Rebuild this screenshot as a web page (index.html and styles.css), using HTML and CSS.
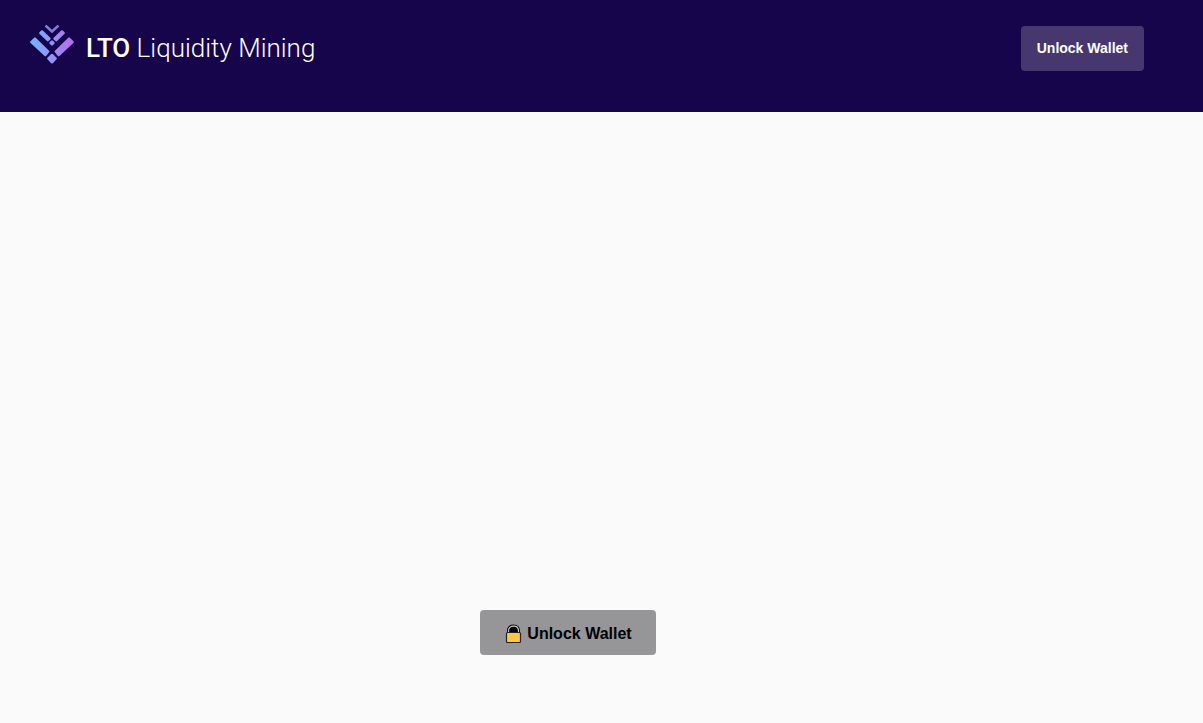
FILE: index.html
```html
<!DOCTYPE html>
<html lang="en">
<head>
<meta charset="utf-8">
<meta name="viewport" content="width=device-width, initial-scale=1">
<title>LTO Liquidity Mining</title>
<link rel="stylesheet" href="styles.css">
</head>
<body>
<header class="topbar">
  <div class="brand">
    <svg class="brand-logo" viewBox="0 0 44 40" aria-hidden="true">
      <defs>
        <linearGradient id="glow" gradientUnits="userSpaceOnUse" x1="0" y1="0" x2="44" y2="0">
          <stop offset="0" stop-color="#74b4ff"/>
          <stop offset="0.5" stop-color="#9492fa"/>
          <stop offset="1" stop-color="#bd66ee"/>
        </linearGradient>
      </defs>
      <g fill="url(#glow)" stroke="url(#glow)" stroke-width="2.400" stroke-linejoin="round">
        <path d="M1.400 17 4.900 13.600 18.200 26.600 15.400 30Z"/>
        <path d="M42.600 17 39.100 13.600 25.800 26.600 28.600 30Z"/>
        <path d="M22 29.900 25.700 33.500 22 37.300 18.300 33.500Z"/>
        <path d="M10.300 8 12 6.400 19.500 13.600 17.800 15.200Z"/>
        <path d="M33.700 8 32 6.400 24.500 13.600 26.200 15.200Z"/>
        <path d="M22 16.600 23.500 18 22 19.500 20.500 18Z"/>
      </g>
      <path d="M15.500 .5 22 6.500 28.500 .5" fill="none" stroke="url(#glow)" stroke-width="2.400" opacity="0.850"/>
    </svg>
    <h1 class="brand-name"><strong>LTO</strong> Liquidity Mining</h1>
  </div>
  <button class="button button-header" type="button">Unlock Wallet</button>
</header>
<main class="content">
  <button class="button button-main" type="button">
    <svg class="lock" viewBox="0 0 19 20" aria-hidden="true">
      <path d="M4.500 10V7C4.500 3.500 6.500 2 9.500 2S14.500 3.500 14.500 7V10Z" fill="#000" stroke="#000" stroke-width="3"/>
      <path d="M4.500 9V7C4.500 3.800 6.500 2.200 9.500 2.200S14.500 3.800 14.500 7V9" fill="none" stroke="#c8c8c8" stroke-width="1.200"/>
      <rect x="2.500" y="8.500" width="14" height="10" rx="1" fill="#ffc83d" stroke="#222" stroke-width="1.200"/>
    </svg>
    Unlock Wallet
  </button>
</main>
</body>
</html>
```
FILE: styles.css
```css
* {
  box-sizing: border-box;
}

body {
  margin: 0;
  min-height: 100vh;
  display: flex;
  flex-direction: column;
  background: #fafafa;
  font-family: "Liberation Sans", Arial, sans-serif;
}

.topbar {
  display: flex;
  justify-content: space-between;
  align-items: flex-start;
  padding: 26px 59px 41px 30px;
  background: #17054b;
}

.brand {
  display: flex;
  align-items: center;
  gap: 12px;
  height: 44px;
}

.brand-logo {
  width: 44px;
  height: 40px;
  margin-bottom: 6px;
}

.brand-name {
  margin: 0;
  color: #fff;
  font-family: Roboto, sans-serif;
  font-size: 26px;
  font-weight: 300;
  line-height: 32px;
}

.brand-name strong {
  font-weight: 500;
}

.button {
  display: flex;
  align-items: center;
  justify-content: center;
  height: 45px;
  border: 0;
  border-radius: 4px;
  font-family: inherit;
  font-weight: 700;
  cursor: pointer;
}

.button-header {
  padding: 0 16px 2px;
  background: #46376f;
  color: #fff;
  font-size: 14px;
}

.button-main {
  gap: 4px;
  padding: 2px 24px 0;
  background: #969698;
  color: #000;
  font-size: 16px;
}

.lock {
  width: 19px;
  height: 20px;
}

.content {
  flex: 1;
  display: flex;
  justify-content: center;
  align-items: flex-end;
  padding: 0 67px 68px 0;
}
```
